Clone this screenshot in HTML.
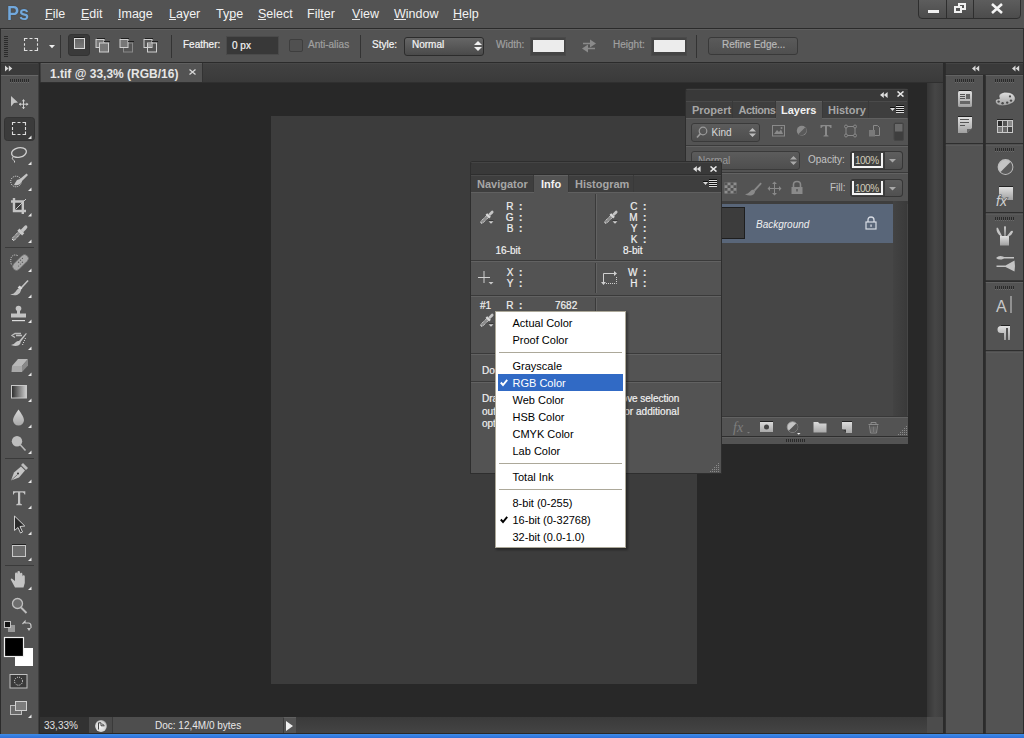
<!DOCTYPE html>
<html><head><meta charset="utf-8">
<style>
*{margin:0;padding:0;box-sizing:border-box}
html,body{width:1024px;height:738px;overflow:hidden;background:#535353;font-family:"Liberation Sans",sans-serif;color:#e6e6e6}
div,span,svg{position:absolute}
.t{white-space:nowrap;line-height:1}
#menubar{left:0;top:0;width:1024px;height:28px;background:#535353}
.m{top:8px;font-size:12.5px;color:#f2f2f2;white-space:nowrap;line-height:1}
.m u{text-decoration:none;position:relative}
.m u:after{content:"";position:absolute;left:0;right:0;bottom:1.5px;height:1px;background:#e8e8e8}
#line28{left:0;top:28px;width:1024px;height:1px;background:#2b2b2b}
#optbar{left:0;top:29px;width:1024px;height:33px;background:#535353;border-top:1px solid #5e5e5e}
#line62{left:0;top:62px;width:1024px;height:1px;background:#2b2b2b}
#tabbar{left:40px;top:63px;width:903px;height:20px;background:linear-gradient(#424242,#3a3a3a);border-bottom:1px solid #2f2f2f}
#pasteboard{left:40px;top:83px;width:887px;height:634px;background:#282828}
#doc{left:271px;top:116px;width:426px;height:568px;background:#3c3c3c}
#vscroll{left:927px;top:83px;width:16px;height:634px;background:linear-gradient(90deg,#363636,#464646 50%,#3e3e3e)}
#status{left:40px;top:717px;width:887px;height:17px;background:#3e3e3e;border-bottom:1px solid #2a2826}
#corner{left:927px;top:717px;width:16px;height:17px;background:#4c4c4c;border-bottom:1px solid #2a2826}
#taskbar{left:0;top:734px;width:1024px;height:4px;background:linear-gradient(#3d8ce9,#2f70d8)}
#toolbar{left:0;top:0;width:40px;height:738px}
.sep{background:#353535;width:1px}
.lbl{font-size:10px;color:#f4f4f4;-webkit-text-stroke:0.2px currentColor;white-space:nowrap;line-height:1}
.dis{color:#a0a0a0}

.pn{background:#535353}
.hd{background:#393939}
.tb{font-size:11px;font-weight:bold;color:#a6a6a6;white-space:nowrap;line-height:1}
.tba{color:#f2f2f2}
.it{font-size:10px;color:#f0f0f0;-webkit-text-stroke:0.2px currentColor;white-space:nowrap;line-height:1}
.dk{background:#333}
.lt{background:#606060}
.mi{font-size:11px;color:#000;white-space:nowrap;line-height:1}
</style></head><body>
<div id="menubar">
  <div class="t" style="left:7px;top:1.5px;font-size:21px;font-weight:bold;color:#72a8dc;transform:scaleX(0.86);transform-origin:0 0;text-shadow:0 0 1px #2a2a2a">Ps</div>
  <div class="m" style="left:45px"><u>F</u>ile</div>
  <div class="m" style="left:81px"><u>E</u>dit</div>
  <div class="m" style="left:118px"><u>I</u>mage</div>
  <div class="m" style="left:169px"><u>L</u>ayer</div>
  <div class="m" style="left:216px">Ty<u>p</u>e</div>
  <div class="m" style="left:258px"><u>S</u>elect</div>
  <div class="m" style="left:307px">Fil<u>t</u>er</div>
  <div class="m" style="left:352px"><u>V</u>iew</div>
  <div class="m" style="left:394px"><u>W</u>indow</div>
  <div class="m" style="left:453px"><u>H</u>elp</div>
  <!-- window buttons -->
  <div style="left:918px;top:-2px;width:103px;height:21px;border:1px solid #2e2e2e;border-radius:0 0 4px 4px;background:linear-gradient(#5e5e5e,#4c4c4c)">
    <div style="left:27px;top:0;width:1px;height:19px;background:#2e2e2e"></div>
    <div style="left:54px;top:0;width:1px;height:19px;background:#2e2e2e"></div>
    <div style="left:9px;top:10.5px;width:10.5px;height:3.5px;background:#f0f0f0"></div>
    <div style="left:35px;top:4px;width:12px;height:10px">
      <div style="left:4px;top:0;width:8px;height:7px;border:2px solid #f0f0f0"></div>
      <div style="left:0;top:3px;width:8px;height:7px;border:2px solid #f0f0f0;background:#555"></div>
    </div>
    <svg style="left:72px;top:4px" width="12" height="11" viewBox="0 0 12 11"><path d="M1 1 L11 10 M11 1 L1 10" stroke="#f4f4f4" stroke-width="2.6"/></svg>
  </div>
</div>
<div id="line28"></div>
<div id="optbar">
  <!-- grip -->
  <div style="left:4px;top:6px;width:4px;height:21px;background:repeating-linear-gradient(#2a2a2a 0 1px,transparent 1px 2px)"></div>
  <!-- marquee icon -->
  <svg style="left:22px;top:6px" width="18" height="17" viewBox="0 0 18 17"><path d="M2.5 5 V2.5 H5.5 M7.5 2.5 H10.5 M12.5 2.5 H15.5 V5.5 M15.5 7.2 V9.8 M15.5 11.5 V14.5 H12.5 M10.5 14.5 H7.5 M5.5 14.5 H2.5 V11.5 M2.5 9.8 V7.2" fill="none" stroke="#e0e0e0" stroke-width="1.1"/></svg>
  <svg style="left:48.5px;top:15px" width="6" height="4"><path d="M0 0 H6 L3 3.2Z" fill="#f0f0f0"/></svg>
  <div class="sep" style="left:60px;top:5px;height:23px;background:#333"></div>
  <!-- pressed button -->
  <div style="left:68px;top:4px;width:22px;height:22px;background:#3a3a3a;border-radius:3px;border:1px solid #333;box-shadow:0 0 1px #5c5c5c"></div>
  <div style="left:74px;top:7px;width:10px;height:1px;background:#1e1e1e"></div>
  <div style="left:74px;top:8px;width:10.5px;height:10.5px;border:1px solid #dadada;background:linear-gradient(#666,#7a7a7a)"></div>
  <!-- add -->
  <svg style="left:95px;top:7.5px" width="15" height="15" viewBox="0 0 15 15">
    <rect x="1" y="1.5" width="8" height="8" fill="#777" stroke="#d0d0d0" stroke-width="1"/>
    <rect x="4.5" y="5" width="9" height="9" fill="#777" stroke="#d0d0d0" stroke-width="1"/>
    <rect x="2" y="0" width="8" height="1" fill="#202020"/><rect x="9" y="3" width="6" height="1" fill="#202020"/>
  </svg>
  <svg style="left:119px;top:7.5px" width="15" height="15" viewBox="0 0 15 15">
    <rect x="4.5" y="5" width="9" height="9" fill="#555" stroke="#8a8a8a" stroke-width="1"/>
    <rect x="1" y="1.5" width="8" height="8" fill="#777" stroke="#d0d0d0" stroke-width="1"/>
    <rect x="2" y="0" width="8" height="1" fill="#202020"/><rect x="9" y="3" width="6" height="1" fill="#202020"/>
  </svg>
  <svg style="left:143px;top:7.5px" width="15" height="15" viewBox="0 0 15 15">
    <rect x="1" y="1.5" width="8" height="8" fill="none" stroke="#d0d0d0" stroke-width="1"/>
    <rect x="4.5" y="5" width="9" height="9" fill="none" stroke="#d0d0d0" stroke-width="1"/>
    <rect x="5" y="5.5" width="3.5" height="3.5" fill="#999"/>
    <rect x="2" y="0" width="8" height="1" fill="#202020"/><rect x="9" y="3" width="6" height="1" fill="#202020"/>
  </svg>
  <div class="sep" style="left:171px;top:5px;height:23px;background:#333"></div>
  <div class="lbl" style="left:183px;top:10px">Feather:</div>
  <div style="left:226px;top:6px;width:53px;height:19px;background:#383838;border:1px solid #4a4a4a"></div>
  <div class="lbl" style="left:232px;top:11px;color:#f4f4f4">0 px</div>
  <div style="left:289px;top:9px;width:14px;height:13px;border:1px solid #3e3e3e;border-radius:2px;background:#505050"></div>
  <div class="lbl dis" style="left:308px;top:10px">Anti-alias</div>
  <div class="sep" style="left:360px;top:5px;height:23px;background:#333"></div>
  <div class="lbl" style="left:372px;top:10px">Style:</div>
  <div style="left:404px;top:7px;width:80px;height:19px;border:1px solid #2c2c2c;border-radius:3px;background:linear-gradient(#666,#4a4a4a)"></div>
  <div class="lbl" style="left:412px;top:10px;color:#f4f4f4">Normal</div>
  <svg style="left:474px;top:10px" width="8" height="12"><path d="M0 5 L4 1 L8 5Z M0 7 L4 11 L8 7Z" fill="#f0f0f0"/></svg>
  <div class="lbl dis" style="left:496px;top:10px">Width:</div>
  <div style="left:530px;top:7px;width:36px;height:19px;background:#444;border:1px solid #4a4a4a"></div>
  <div style="left:533px;top:9.5px;width:31px;height:12.5px;background:#ececec"></div>
  <svg style="left:581px;top:9px" width="16" height="14" viewBox="0 0 16 14"><path d="M2 4.5 H10 M6 9.5 H14" stroke="#8a8a8a" stroke-width="1.5"/><path d="M9 0.5 L15 4.5 L9 8.5Z M7 5.5 L1 9.5 L7 13.5Z" fill="#8a8a8a"/></svg>
  <div class="lbl dis" style="left:613px;top:10px">Height:</div>
  <div style="left:651px;top:7px;width:36px;height:19px;background:#444;border:1px solid #4a4a4a"></div>
  <div style="left:654px;top:9.5px;width:31px;height:12.5px;background:#ececec"></div>
  <div class="sep" style="left:696px;top:5px;height:23px;background:#333"></div>
  <div style="left:708px;top:7px;width:90px;height:18px;border:1px solid #393939;border-radius:3px;background:linear-gradient(#5a5a5a,#4f4f4f)"></div>
  <div class="lbl" style="left:722px;top:10px;color:#b8b8b8">Refine Edge...</div>
</div>
<div id="line62"></div><div style="left:0;top:29px;width:1px;height:33px;background:#2e2e2e"></div><div style="left:1023px;top:29px;width:1px;height:33px;background:#2e2e2e"></div>
<div id="toolbar">
<svg style="left:0;top:0" width="40" height="738" viewBox="0 0 40 738">
<defs>
<linearGradient id="gg" x1="0" x2="0" y1="0" y2="1"><stop offset="0" stop-color="#d8d8d8"/><stop offset="1" stop-color="#a8a8a8"/></linearGradient>
<linearGradient id="grd" x1="0" x2="1" y1="0" y2="0"><stop offset="0" stop-color="#2a2a2a"/><stop offset="1" stop-color="#d0d0d0"/></linearGradient>
</defs>
<rect x="0" y="63" width="1" height="671" fill="#2b2b2b"/>
<rect x="1" y="63" width="37.5" height="12" fill="#3a3a3a"/>
<rect x="1" y="63" width="37.5" height="1" fill="#434343"/>
<rect x="1" y="75" width="37.5" height="659" fill="#535353"/>
<rect x="1" y="75" width="37.5" height="1" fill="#666"/>
<rect x="38.5" y="63" width="1.5" height="671" fill="#2b2b2b"/>
<path d="M5 65.5 L8.5 68.5 L5 71.5Z M8.8 65.5 L12.3 68.5 L8.8 71.5Z" fill="#d8d8d8"/>
<g fill="#2a2a2a"><rect x="10" y="79" width="1" height="3"/><rect x="12" y="79" width="1" height="3"/><rect x="14" y="79" width="1" height="3"/><rect x="16" y="79" width="1" height="3"/><rect x="18" y="79" width="1" height="3"/><rect x="20" y="79" width="1" height="3"/><rect x="22" y="79" width="1" height="3"/><rect x="24" y="79" width="1" height="3"/><rect x="26" y="79" width="1" height="3"/><rect x="28" y="79" width="1" height="3"/></g>
<g fill="#6a6a6a"><rect x="10" y="82" width="1" height="1"/><rect x="12" y="82" width="1" height="1"/><rect x="14" y="82" width="1" height="1"/><rect x="16" y="82" width="1" height="1"/><rect x="18" y="82" width="1" height="1"/><rect x="20" y="82" width="1" height="1"/><rect x="22" y="82" width="1" height="1"/><rect x="24" y="82" width="1" height="1"/><rect x="26" y="82" width="1" height="1"/><rect x="28" y="82" width="1" height="1"/></g>
<!-- move -->
<path d="M11 96 L18 102.5 L14 103 L11 106.5Z" fill="#c4c4c4"/>
<path d="M23.5 99.5 V109 M19 104.2 H28.2" stroke="#d0d0d0" stroke-width="1"/>
<path d="M23.5 99.5 l-1.8 1.8 h3.6Z M23.5 109 l-1.8 -1.8 h3.6Z M19 104.2 l1.8 -1.8 v3.6Z M28.2 104.2 l-1.8 -1.8 v3.6Z" fill="#d0d0d0"/>
<!-- selected marquee -->
<rect x="4.5" y="117.5" width="30" height="23" rx="3" fill="#3b3b3b" stroke="#333" stroke-width="1"/>
<path d="M12.5 125 V122.5 H15.5 M17.5 122.5 H20.5 M22.5 122.5 H25.5 V125.5 M25.5 127 V130 M25.5 131.5 V134.5 H22.5 M20.5 134.5 H17.5 M15.5 134.5 H12.5 V131.5 M12.5 130 V127" fill="none" stroke="#dedede" stroke-width="1.1"/>
<path d="M31.5 135.5 V139 H28Z" fill="#e8e8e8"/>
<!-- lasso -->
<ellipse cx="19" cy="152.5" rx="7.5" ry="4.8" transform="rotate(-12 19 152.5)" fill="none" stroke="#d0d0d0" stroke-width="1.3"/>
<path d="M13 157 q-2 2 0.5 3 q1.5 0.5 1 2.5" fill="none" stroke="#d0d0d0" stroke-width="1"/>
<path d="M31.5 161.5 V165 H28Z" fill="#e8e8e8"/>
<!-- quick select -->
<circle cx="16" cy="181.5" r="5.3" fill="none" stroke="#e8e8e8" stroke-width="1" stroke-dasharray="1 1.1"/>
<path d="M14 185 q3 1 6 -1 l2 -3 l6 -6 l-1.5 -1.5 l-6.5 5.5 l-3 1 q-2 3 -3 5Z" fill="#c4c4c4"/>
<path d="M31.5 187.5 V191 H28Z" fill="#e8e8e8"/>
<!-- crop -->
<rect x="15" y="202" width="7" height="8" fill="#3e3e3e"/><path d="M14 198 V211 H26 M11 201.5 H22.8 V214" fill="none" stroke="#c4c4c4" stroke-width="2.4"/>
<path d="M15.5 209.5 L26 199" stroke="#c8c8c8" stroke-width="1"/>
<path d="M31.5 213.0 V216.5 H28Z" fill="#e8e8e8"/>
<!-- eyedropper -->
<path d="M12.6 240 L12.2 238.2 L19.6 230.6 L21.6 232.6 L14.2 240.4Z" fill="#8a8a8a" stroke="#e4e4e4" stroke-width="1" stroke-dasharray="1.2 0.8"/>
<path d="M18.4 229.6 L23.2 234.4" stroke="#c8c8c8" stroke-width="3"/>
<path d="M20.6 230 L24 226.4 Q25.8 224.6 27 225.8 Q28.2 227.2 26.4 229 L23 232.4Z" fill="#c4c4c4"/>
<path d="M31.5 239.5 V243 H28Z" fill="#e8e8e8"/>
<rect x="5" y="247" width="29" height="1" fill="#3a3a3a"/>
<!-- healing -->
<path d="M17.5 255.5 q-4 -1.5 -6 1.5 q-1.5 3 0 8" fill="none" stroke="#e0e0e0" stroke-width="1" stroke-dasharray="1 1.2"/>
<rect x="11" y="258.7" width="19" height="7.6" rx="3.8" transform="rotate(-45 20.5 262.5)" fill="#a8a8a8" stroke="#6a6a6a" stroke-width="0.6"/>
<g fill="#5e5e5e"><circle cx="18.6" cy="262.2" r="0.7"/><circle cx="20.5" cy="260.3" r="0.7"/><circle cx="22.4" cy="262.2" r="0.7"/><circle cx="20.5" cy="264.1" r="0.7"/><circle cx="18.6" cy="266" r="0.6"/><circle cx="22.4" cy="258.4" r="0.6"/></g>
<path d="M31.5 268.5 V272 H28Z" fill="#e8e8e8"/>
<!-- brush -->
<path d="M19.5 288.5 L27.5 280 L28.6 281.1 L20.6 289.8Z" fill="#c4c4c4"/>
<path d="M17.6 287.6 L19.8 285.6 L22.4 288.2 L20.4 290.2Z" fill="#d8d8d8"/>
<path d="M10 294.2 q3.5 0.2 5.5 -2.5 q1.5 -2.6 3.6 -3.4 l2 2 q-0.6 3 -3.6 4.4 q-3.5 1.5 -7.5 -0.5Z" fill="#c0c0c0"/>
<path d="M31.5 294.5 V298 H28Z" fill="#e8e8e8"/>
<!-- stamp -->
<circle cx="18.5" cy="308.5" r="2.8" fill="#c4c4c4"/><rect x="17" y="309" width="3" height="5" fill="#c4c4c4"/>
<rect x="11" y="313.5" width="15" height="4" fill="#c4c4c4"/>
<rect x="12" y="320" width="13" height="1.2" fill="#dcdcdc"/>
<path d="M31.5 319.5 V323 H28Z" fill="#e8e8e8"/>
<!-- history brush -->
<path d="M21 333.5 H15 l-3 2 l3 2 M16 335.5 H22" fill="none" stroke="#bcbcbc" stroke-width="1.3"/>
<path d="M11 345 q3 -0.5 5 -3 q1.5 -1.5 3 -1 l7 -8 l0.8 0.8 l-6 8 q0 2.5 -2.5 3.7 q-3 1 -7.3 -0.5Z" fill="#c4c4c4"/>
<path d="M25.5 338 l-3 7" stroke="#e0e0e0" stroke-width="1" stroke-dasharray="1 1.2"/>
<path d="M31.5 346.5 V350 H28Z" fill="#e8e8e8"/>
<!-- eraser -->
<path d="M12 366 L18 359 H28 L22 366Z" fill="#b8b8b8"/><path d="M12 366 H22 V372 H11.5Z" fill="#a8a8a8"/><path d="M22 366 L28 359 V365.5 L22 372Z" fill="#888"/>
<path d="M31.5 372.5 V376 H28Z" fill="#e8e8e8"/>
<!-- gradient -->
<rect x="11.5" y="385.5" width="15" height="12.5" fill="url(#grd)" stroke="#c8c8c8" stroke-width="1"/>
<path d="M31.5 398.5 V402 H28Z" fill="#e8e8e8"/>
<!-- blur drop -->
<path d="M18.5 409.5 Q13 417 13 420 A5.5 5.5 0 0 0 24 420 Q24 417 18.5 409.5Z" fill="url(#gg)"/>
<path d="M31.5 424.5 V428 H28Z" fill="#e8e8e8"/>
<!-- dodge -->
<circle cx="17" cy="441.2" r="5.2" fill="#bdbdbd"/><path d="M20 444.5 L25.5 450.5" stroke="#b8b8b8" stroke-width="1.6"/>
<path d="M31.5 450.5 V454 H28Z" fill="#e8e8e8"/>
<rect x="5" y="458" width="29" height="1" fill="#3a3a3a"/>
<!-- pen -->
<path d="M11 480.5 L14 472.5 L21 466.5 L25 470.5 L19 477.5Z" fill="#c4c4c4"/><path d="M21 465 L23 463 L28 468 L26 470Z" fill="#bcbcbc"/>
<circle cx="18" cy="473.5" r="1" fill="#333"/><path d="M11 480.5 L17.5 474.5" stroke="#555" stroke-width="0.7"/>
<path d="M31.5 479.5 V483 H28Z" fill="#e8e8e8"/>
<!-- type -->
<path d="M13 491.2 H25.3 V494.5 H24.5 Q24 492.5 22.5 492.5 H20.2 V503.5 L22 504.5 V505.2 H16.2 V504.5 L18 503.5 V492.5 H15.8 Q14 492.5 13.8 494.5 H13Z" fill="#c4c4c4"/>
<path d="M31.5 505.5 V509 H28Z" fill="#e8e8e8"/>
<!-- path select -->
<path d="M14.5 516 V530.5 L18 527.5 L20.5 533 L22.5 532 L20 526.5 L24.8 526Z" fill="#2a2a2a" stroke="#cfcfcf" stroke-width="1"/>
<path d="M31.5 531.5 V535 H28Z" fill="#e8e8e8"/>
<!-- rectangle -->
<rect x="12.5" y="545.5" width="13" height="11" fill="#6c6c6c" stroke="#c8c8c8" stroke-width="1"/>
<rect x="12" y="544" width="14" height="1" fill="#222"/>
<path d="M31.5 557.5 V561 H28Z" fill="#e8e8e8"/>
<rect x="5" y="565" width="29" height="1" fill="#3a3a3a"/>
<!-- hand -->
<path d="M15 587.5 L11 580 q-1 -1.5 0.8 -1.6 L15 581 V574 q0 -1.4 1.2 -1.4 q1.2 0 1.2 1.4 V580 V572.5 q0 -1.4 1.3 -1.4 q1.3 0 1.3 1.4 V580 V574 q0 -1.3 1.2 -1.3 q1.2 0 1.2 1.3 V580 V576.5 q0 -1.2 1.2 -1.2 q1.2 0 1.2 1.2 V583 L23.5 587.5Z" fill="#c4c4c4"/>
<path d="M31.5 586.5 V590 H28Z" fill="#e8e8e8"/>
<!-- zoom -->
<circle cx="17.5" cy="603.5" r="5" fill="#6e6e6e" stroke="#c0c0c0" stroke-width="1.3"/><path d="M21 607.5 L26.5 613" stroke="#bcbcbc" stroke-width="2"/>
<!-- small swatches -->
<rect x="8.5" y="625.5" width="6" height="6" fill="#999" stroke="#999"/>
<rect x="4.5" y="621.5" width="6" height="6" fill="#111" stroke="#c0c0c0" stroke-width="1"/>
<path d="M22.5 624 L25 621.2 V623 H28.5 Q31 623 31 626 V628" fill="none" stroke="#c8c8c8" stroke-width="1.2"/>
<path d="M29 631 L27 628 H31Z" fill="#c8c8c8"/>
<!-- fg bg -->
<rect x="14.5" y="647.5" width="19" height="19" fill="#fff" stroke="#535353" stroke-width="1"/>
<rect x="4.5" y="637.5" width="19" height="19" fill="#000" stroke="#f0f0f0" stroke-width="1.2"/>
<!-- quick mask -->
<rect x="10" y="674.5" width="17" height="13.5" fill="#3a3a3a" stroke="#c0c0c0" stroke-width="1"/>
<circle cx="18.5" cy="681.2" r="4" fill="none" stroke="#e8e8e8" stroke-width="1" stroke-dasharray="1 1.1"/>
<!-- screen mode -->
<rect x="10.5" y="705.5" width="11" height="9" fill="#6a6a6a" stroke="#c0c0c0" stroke-width="1"/>
<rect x="15.5" y="701.5" width="11" height="9" fill="#7c7c7c" stroke="#d0d0d0" stroke-width="1"/>
<path d="M31.5 714.5 V718 H28Z" fill="#e8e8e8"/>
</svg></div>
<div id="tabbar">
  <div style="left:1px;top:0;width:161px;height:19px;background:#535353;border-top:1px solid #5f5f5f"></div><div style="left:162px;top:0;width:1px;height:19px;background:#333"></div><div style="left:163px;top:0;width:740px;height:1px;background:#474747"></div>
  <div class="t" style="left:10px;top:5px;font-size:12px;font-weight:bold;color:#e6e6e6">1.tif @ 33,3% (RGB/16)</div>
  <svg style="left:149px;top:6px" width="7" height="6"><path d="M0.5 0.5 L6.5 5.5 M6.5 0.5 L0.5 5.5" stroke="#d8d8d8" stroke-width="1.3"/></svg>
</div>
<div id="pasteboard"></div>
<div id="doc"></div>
<div id="vscroll"></div>
<div id="status">
  <div style="left:0;top:0;width:49px;height:16px;background:#323232"></div>
  <div class="t" style="left:4px;top:4px;font-size:10px;color:#e0e0e0">33,33%</div>
  <div style="left:49px;top:0;width:23px;height:16px;background:#4a4a4a"></div>
  <svg style="left:54px;top:1.5px" width="14" height="14" viewBox="0 0 14 14"><defs><radialGradient id="sg" cx="0.45" cy="0.55" r="0.6"><stop offset="0" stop-color="#f4f4f4"/><stop offset="0.7" stop-color="#d8d8d8"/><stop offset="1" stop-color="#9a9a9a"/></radialGradient></defs><circle cx="7" cy="7" r="5.9" fill="url(#sg)"/><path d="M4.5 10.5 V3.8 H7 V6.8 H10.5" fill="none" stroke="#333" stroke-width="0.9"/><path d="M7.8 4.8 L10.2 6.2" stroke="#333" stroke-width="0.8"/></svg>
  <div style="left:72px;top:0;width:171px;height:16px;background:#4e4e4e;border-left:1px solid #3a3a3a"></div>
  <div class="t" style="left:115px;top:4px;font-size:10px;color:#e8e8e8">Doc: 12,4M/0 bytes</div>
  <div style="left:243px;top:0;width:13px;height:16px;background:#545454;border-left:1px solid #3a3a3a;border-top:1px solid #606060"></div>
  <svg style="left:246px;top:4px" width="8" height="10"><path d="M0 0 L7 5 L0 10Z" fill="#f0f0f0"/></svg>
  <div style="left:256px;top:0;width:631px;height:16px;background:linear-gradient(#3a3a3a,#444)"></div>
</div>
<div id="corner"></div>
<svg style="left:943px;top:0" width="81" height="738" viewBox="943 0 81 738">
<defs><linearGradient id="dg" x1="0" x2="0" y1="0" y2="1"><stop offset="0" stop-color="#e0e0e0"/><stop offset="1" stop-color="#a0a0a0"/></linearGradient></defs>
<rect x="943" y="63" width="81" height="671" fill="#2b2b2b"/>
<rect x="945.8" y="63" width="77.4" height="11.5" fill="#3a3a3a"/>
<rect x="945.8" y="63" width="77.4" height="1" fill="#444"/>
<path d="M975.5 65.5 L972 68.5 L975.5 71.5Z M979.2 65.5 L975.7 68.5 L979.2 71.5Z" fill="#d8d8d8"/>
<path d="M1015.5 65.5 L1012 68.5 L1015.5 71.5Z M1019.2 65.5 L1015.7 68.5 L1019.2 71.5Z" fill="#d8d8d8"/>
<rect x="945.8" y="75" width="37.2" height="68" fill="#535353"/><rect x="945.8" y="75" width="37.2" height="1" fill="#626262"/><rect x="945.8" y="143" width="37.2" height="1.5" fill="#2e2e2e"/>
<rect x="945.8" y="144.5" width="37.2" height="589.0" fill="#535353"/><rect x="945.8" y="144.5" width="37.2" height="1" fill="#626262"/><rect x="945.8" y="733.5" width="37.2" height="1.5" fill="#2e2e2e"/>
<rect x="985.8" y="75" width="37.4" height="68" fill="#535353"/><rect x="985.8" y="75" width="37.4" height="1" fill="#626262"/><rect x="985.8" y="143" width="37.4" height="1.5" fill="#2e2e2e"/>
<rect x="985.8" y="144.5" width="37.4" height="67.5" fill="#535353"/><rect x="985.8" y="144.5" width="37.4" height="1" fill="#626262"/><rect x="985.8" y="212" width="37.4" height="1.5" fill="#2e2e2e"/>
<rect x="985.8" y="213.5" width="37.4" height="67.0" fill="#535353"/><rect x="985.8" y="213.5" width="37.4" height="1" fill="#626262"/><rect x="985.8" y="280.5" width="37.4" height="1.5" fill="#2e2e2e"/>
<rect x="985.8" y="282" width="37.4" height="68" fill="#535353"/><rect x="985.8" y="282" width="37.4" height="1" fill="#626262"/><rect x="985.8" y="350" width="37.4" height="1.5" fill="#2e2e2e"/>
<rect x="985.8" y="351.5" width="37.4" height="382.0" fill="#535353"/><rect x="985.8" y="351.5" width="37.4" height="1" fill="#626262"/><rect x="985.8" y="733.5" width="37.4" height="1.5" fill="#2e2e2e"/>
<g><rect x="955" y="79" width="1" height="3" fill="#2a2a2a"/><rect x="955" y="82" width="1" height="1" fill="#6a6a6a"/><rect x="957" y="79" width="1" height="3" fill="#2a2a2a"/><rect x="957" y="82" width="1" height="1" fill="#6a6a6a"/><rect x="959" y="79" width="1" height="3" fill="#2a2a2a"/><rect x="959" y="82" width="1" height="1" fill="#6a6a6a"/><rect x="961" y="79" width="1" height="3" fill="#2a2a2a"/><rect x="961" y="82" width="1" height="1" fill="#6a6a6a"/><rect x="963" y="79" width="1" height="3" fill="#2a2a2a"/><rect x="963" y="82" width="1" height="1" fill="#6a6a6a"/><rect x="965" y="79" width="1" height="3" fill="#2a2a2a"/><rect x="965" y="82" width="1" height="1" fill="#6a6a6a"/><rect x="967" y="79" width="1" height="3" fill="#2a2a2a"/><rect x="967" y="82" width="1" height="1" fill="#6a6a6a"/><rect x="969" y="79" width="1" height="3" fill="#2a2a2a"/><rect x="969" y="82" width="1" height="1" fill="#6a6a6a"/><rect x="971" y="79" width="1" height="3" fill="#2a2a2a"/><rect x="971" y="82" width="1" height="1" fill="#6a6a6a"/><rect x="973" y="79" width="1" height="3" fill="#2a2a2a"/><rect x="973" y="82" width="1" height="1" fill="#6a6a6a"/><rect x="995" y="79" width="1" height="3" fill="#2a2a2a"/><rect x="995" y="82" width="1" height="1" fill="#6a6a6a"/><rect x="997" y="79" width="1" height="3" fill="#2a2a2a"/><rect x="997" y="82" width="1" height="1" fill="#6a6a6a"/><rect x="999" y="79" width="1" height="3" fill="#2a2a2a"/><rect x="999" y="82" width="1" height="1" fill="#6a6a6a"/><rect x="1001" y="79" width="1" height="3" fill="#2a2a2a"/><rect x="1001" y="82" width="1" height="1" fill="#6a6a6a"/><rect x="1003" y="79" width="1" height="3" fill="#2a2a2a"/><rect x="1003" y="82" width="1" height="1" fill="#6a6a6a"/><rect x="1005" y="79" width="1" height="3" fill="#2a2a2a"/><rect x="1005" y="82" width="1" height="1" fill="#6a6a6a"/><rect x="1007" y="79" width="1" height="3" fill="#2a2a2a"/><rect x="1007" y="82" width="1" height="1" fill="#6a6a6a"/><rect x="1009" y="79" width="1" height="3" fill="#2a2a2a"/><rect x="1009" y="82" width="1" height="1" fill="#6a6a6a"/><rect x="1011" y="79" width="1" height="3" fill="#2a2a2a"/><rect x="1011" y="82" width="1" height="1" fill="#6a6a6a"/><rect x="1013" y="79" width="1" height="3" fill="#2a2a2a"/><rect x="1013" y="82" width="1" height="1" fill="#6a6a6a"/><rect x="995" y="148" width="1" height="3" fill="#2a2a2a"/><rect x="995" y="151" width="1" height="1" fill="#6a6a6a"/><rect x="997" y="148" width="1" height="3" fill="#2a2a2a"/><rect x="997" y="151" width="1" height="1" fill="#6a6a6a"/><rect x="999" y="148" width="1" height="3" fill="#2a2a2a"/><rect x="999" y="151" width="1" height="1" fill="#6a6a6a"/><rect x="1001" y="148" width="1" height="3" fill="#2a2a2a"/><rect x="1001" y="151" width="1" height="1" fill="#6a6a6a"/><rect x="1003" y="148" width="1" height="3" fill="#2a2a2a"/><rect x="1003" y="151" width="1" height="1" fill="#6a6a6a"/><rect x="1005" y="148" width="1" height="3" fill="#2a2a2a"/><rect x="1005" y="151" width="1" height="1" fill="#6a6a6a"/><rect x="1007" y="148" width="1" height="3" fill="#2a2a2a"/><rect x="1007" y="151" width="1" height="1" fill="#6a6a6a"/><rect x="1009" y="148" width="1" height="3" fill="#2a2a2a"/><rect x="1009" y="151" width="1" height="1" fill="#6a6a6a"/><rect x="1011" y="148" width="1" height="3" fill="#2a2a2a"/><rect x="1011" y="151" width="1" height="1" fill="#6a6a6a"/><rect x="1013" y="148" width="1" height="3" fill="#2a2a2a"/><rect x="1013" y="151" width="1" height="1" fill="#6a6a6a"/><rect x="995" y="217" width="1" height="3" fill="#2a2a2a"/><rect x="995" y="220" width="1" height="1" fill="#6a6a6a"/><rect x="997" y="217" width="1" height="3" fill="#2a2a2a"/><rect x="997" y="220" width="1" height="1" fill="#6a6a6a"/><rect x="999" y="217" width="1" height="3" fill="#2a2a2a"/><rect x="999" y="220" width="1" height="1" fill="#6a6a6a"/><rect x="1001" y="217" width="1" height="3" fill="#2a2a2a"/><rect x="1001" y="220" width="1" height="1" fill="#6a6a6a"/><rect x="1003" y="217" width="1" height="3" fill="#2a2a2a"/><rect x="1003" y="220" width="1" height="1" fill="#6a6a6a"/><rect x="1005" y="217" width="1" height="3" fill="#2a2a2a"/><rect x="1005" y="220" width="1" height="1" fill="#6a6a6a"/><rect x="1007" y="217" width="1" height="3" fill="#2a2a2a"/><rect x="1007" y="220" width="1" height="1" fill="#6a6a6a"/><rect x="1009" y="217" width="1" height="3" fill="#2a2a2a"/><rect x="1009" y="220" width="1" height="1" fill="#6a6a6a"/><rect x="1011" y="217" width="1" height="3" fill="#2a2a2a"/><rect x="1011" y="220" width="1" height="1" fill="#6a6a6a"/><rect x="1013" y="217" width="1" height="3" fill="#2a2a2a"/><rect x="1013" y="220" width="1" height="1" fill="#6a6a6a"/><rect x="995" y="286" width="1" height="3" fill="#2a2a2a"/><rect x="995" y="289" width="1" height="1" fill="#6a6a6a"/><rect x="997" y="286" width="1" height="3" fill="#2a2a2a"/><rect x="997" y="289" width="1" height="1" fill="#6a6a6a"/><rect x="999" y="286" width="1" height="3" fill="#2a2a2a"/><rect x="999" y="289" width="1" height="1" fill="#6a6a6a"/><rect x="1001" y="286" width="1" height="3" fill="#2a2a2a"/><rect x="1001" y="289" width="1" height="1" fill="#6a6a6a"/><rect x="1003" y="286" width="1" height="3" fill="#2a2a2a"/><rect x="1003" y="289" width="1" height="1" fill="#6a6a6a"/><rect x="1005" y="286" width="1" height="3" fill="#2a2a2a"/><rect x="1005" y="289" width="1" height="1" fill="#6a6a6a"/><rect x="1007" y="286" width="1" height="3" fill="#2a2a2a"/><rect x="1007" y="289" width="1" height="1" fill="#6a6a6a"/><rect x="1009" y="286" width="1" height="3" fill="#2a2a2a"/><rect x="1009" y="289" width="1" height="1" fill="#6a6a6a"/><rect x="1011" y="286" width="1" height="3" fill="#2a2a2a"/><rect x="1011" y="289" width="1" height="1" fill="#6a6a6a"/><rect x="1013" y="286" width="1" height="3" fill="#2a2a2a"/><rect x="1013" y="289" width="1" height="1" fill="#6a6a6a"/></g>
<!-- doc info icon -->
<rect x="958" y="91" width="14" height="16" rx="1.5" fill="url(#dg)"/>
<rect x="959" y="90" width="12" height="1" fill="#222"/>
<rect x="960" y="94" width="5" height="1" fill="#555"/><rect x="960" y="96" width="5" height="1" fill="#555"/><rect x="960" y="98" width="5" height="1" fill="#555"/>
<rect x="966" y="94" width="4" height="5" fill="#666"/><rect x="960" y="101" width="10" height="3" fill="#666"/>
<!-- notes icon -->
<path d="M958 117 H972 V128 L967 133 H958Z" fill="url(#dg)"/>
<rect x="958" y="116" width="14" height="1" fill="#222"/>
<rect x="960" y="119" width="9" height="1" fill="#555"/><rect x="960" y="122" width="9" height="1" fill="#555"/><rect x="960" y="125" width="5" height="1" fill="#555"/>
<path d="M967 133 V129 H972Z" fill="#666"/>
<!-- palette -->
<path d="M1006 92.2 C1012 92.2 1015.2 95.2 1015.2 98.6 C1015.2 101.2 1013.6 102.6 1011.4 103.6 C1007.6 105.6 1003 106.2 999.5 105.4 C996.6 104.6 995.4 103 995.4 101.2 C995.4 99.6 996.8 99 998.6 99 C999.6 99 999.8 98.2 999.2 97.2 C998.4 94.6 1001.4 92.2 1006 92.2Z" fill="url(#dg)" stroke="#3a3a3a" stroke-width="0.5"/>
<circle cx="998.6" cy="101.6" r="1.2" fill="#4a4a4a"/><circle cx="1002.6" cy="103.2" r="1.2" fill="#4a4a4a"/><circle cx="1007.2" cy="102.6" r="1.2" fill="#4a4a4a"/><circle cx="1011" cy="100.6" r="1.2" fill="#4a4a4a"/><circle cx="1010" cy="96.4" r="1.1" fill="#4a4a4a"/>
<!-- swatches -->
<rect x="997" y="120" width="16" height="13" fill="#c8c8c8"/>
<rect x="997" y="119" width="16" height="1" fill="#222"/>
<rect x="998" y="121" width="4" height="5" fill="#2a2a2a"/><rect x="1003" y="121" width="4" height="5" fill="#555"/><rect x="1008" y="121" width="4" height="5" fill="#8a8a8a"/>
<rect x="998" y="127" width="4" height="5" fill="#777"/><rect x="1003" y="127" width="4" height="5" fill="#666"/><rect x="1008" y="127" width="4" height="5" fill="#444"/>
<!-- adjustments -->
<circle cx="1005.5" cy="167" r="7.2" fill="#c4c4c4" stroke="#bdbdbd" stroke-width="1.4"/>
<path d="M1010.4 162.1 A6.5 6.5 0 0 1 1000.6 171.9Z" fill="#5a5a5a"/>
<!-- styles -->
<rect x="999" y="187" width="14" height="13" fill="url(#dg)"/><rect x="999" y="186" width="14" height="1" fill="#222"/>
<text x="996" y="205.5" font-family="Liberation Sans" font-style="italic" font-size="14" fill="#d0d0d0" stroke="#535353" stroke-width="1.2" paint-order="stroke">fx</text>
<!-- brushes -->
<rect x="1000" y="236" width="9" height="9.5" fill="url(#dg)"/>
<path d="M1002 236 L998 228 q-1.5 -1.5 -1.5 1 q0 4 4 7Z M1004.5 236 L1004 227 q1 -2 2 0 l-0.5 9Z M1007 236 l4 -5 q2 -1 2 1 q-1 3 -4.5 4.5Z" fill="#c4c4c4"/>
<!-- brush presets -->
<path d="M996 258 q3 -3 7 -1.5 l1 0.5 h10 v1.5 h-10 l-1 0.5 q-4 1.5 -7 -1Z" fill="#c4c4c4"/>
<path d="M996.5 265.5 h9 l9 -5 q1 6 0 11 l-9 -4.5 h-9Z" fill="#c4c4c4"/>
<!-- character -->
<text x="996" y="312" font-family="Liberation Sans" font-size="16" fill="#c8c8c8">A</text>
<rect x="1010.5" y="296" width="1" height="17" fill="#d0d0d0"/>
<!-- paragraph -->
<path d="M1008 326 H1001 q-3.5 0 -3.5 3.5 q0 3.5 3.5 3.5 H1004 V340 H1006 V328 H1008 V340 H1010 V326Z" fill="url(#dg)"/>
<rect x="1001" y="325" width="9" height="1" fill="#222"/>
<rect x="1023.2" y="63" width="0.8" height="671" fill="#2b2b2b"/>
</svg>
<div id="layers"><div style="left:685px;top:88px;width:223px;height:356px;background:#2e2e2e;border-radius:3px 3px 0 0"></div>
<div style="left:686px;top:89px;width:222px;height:11px;background:#393939;border-radius:3px 3px 0 0"></div>
<div style="left:686px;top:89px;width:222px;height:1px;background:#444;border-radius:3px 3px 0 0"></div>
<svg style="left:880px;top:91.5px" width="8" height="6" viewBox="0 0 8 6"><path d="M3.8 0 L0 3 L3.8 6Z M7.6 0 L3.8 3 L7.6 6Z" fill="#e0e0e0"/></svg>
<svg style="left:897px;top:91px" width="7" height="6" viewBox="0 0 7 6"><path d="M0.5 0.5 L6.5 5.5 M6.5 0.5 L0.5 5.5" stroke="#e8e8e8" stroke-width="1.6"/></svg>
<div style="left:686px;top:100px;width:222px;height:18px;background:#393939"></div>
<div style="left:686px;top:101px;width:46px;height:17px;background:#3e3e3e;border-top:1px solid #4a4a4a"></div>
<div style="left:733px;top:101px;width:42px;height:17px;background:#3e3e3e;border-top:1px solid #4a4a4a"></div>
<div style="left:776px;top:101px;width:46px;height:18px;background:#535353;border-top:1px solid #626262"></div>
<div style="left:823px;top:101px;width:45px;height:17px;background:#3e3e3e;border-top:1px solid #4a4a4a"></div>
<div style="left:869px;top:101px;width:38px;height:17px;background:#3e3e3e;border-top:1px solid #4a4a4a"></div>
<div class="tb" style="left:692px;top:105px">Propert</div>
<div class="tb" style="left:738.5px;top:105px;letter-spacing:-0.5px">Actions</div>
<div class="tb tba" style="left:781px;top:105px">Layers</div>
<div class="tb" style="left:828px;top:105px">History</div>
<svg style="left:890px;top:105px" width="15" height="9" viewBox="0 0 15 9"><rect x="0" y="2" width="5" height="1" fill="#111"/><path d="M0 3 H5 L2.5 6Z" fill="#dcdcdc"/><path d="M6 0.5 H14 M6 2.5 H14 M6 4.5 H14 M6 6.5 H14" stroke="#111" stroke-width="1"/><path d="M6 1.5 H14 M6 3.5 H14 M6 5.5 H14 M6 7.5 H14" stroke="#dcdcdc" stroke-width="1"/></svg>
<div style="left:686px;top:118px;width:222px;height:100px;background:#535353"></div>
<div style="left:686px;top:118px;width:90px;height:1px;background:#606060"></div>
<div style="left:822px;top:118px;width:85px;height:1px;background:#606060"></div>
<div style="left:690.5px;top:123px;width:69px;height:19px;border:1px solid #3a3a3a;border-radius:3px;background:linear-gradient(#5c5c5c,#4e4e4e)"></div>
<svg style="left:696px;top:126px" width="12" height="13" viewBox="0 0 12 13"><circle cx="7" cy="5" r="3.8" fill="none" stroke="#9a9a9a" stroke-width="1.2"/><path d="M4.5 7.5 L1 11.5" stroke="#9a9a9a" stroke-width="1.6"/></svg>
<div class="t" style="left:711.5px;top:128px;font-size:10px;color:#d8d8d8">Kind</div>
<svg style="left:749px;top:127px" width="7" height="11"><path d="M0 4.5 L3.5 1 L7 4.5Z M0 6.5 L3.5 10 L7 6.5Z" fill="#bdbdbd"/></svg>
<svg style="left:770px;top:122px" width="135" height="20" viewBox="770 122 135 20"><rect x="772.5" y="125.5" width="12" height="10.5" fill="none" stroke="#8a8a8a" stroke-width="1"/><path d="M774 134 L777 130 L779 132 L781 129.5 L783 134Z" fill="#8a8a8a"/><circle cx="781.5" cy="128" r="1" fill="#8a8a8a"/><circle cx="801.8" cy="130.8" r="5" fill="#8a8a8a"/><path d="M805.3 127.3 A5 5 0 0 1 798.3 134.3Z" fill="#5a5a5a"/><path d="M820.5 125 H831.5 V128 H830.5 Q830 126.3 828.5 126.3 H827 V135 L828.5 135.8 V136.5 H823.5 V135.8 L825 135 V126.3 H823.5 Q822 126.3 821.5 128 H820.5Z" fill="#8a8a8a"/><rect x="846" y="126.5" width="9" height="9" fill="none" stroke="#8a8a8a" stroke-width="1"/><circle cx="846" cy="126.5" r="1.5" fill="#535353" stroke="#8a8a8a"/><circle cx="855" cy="126.5" r="1.5" fill="#535353" stroke="#8a8a8a"/><circle cx="846" cy="135.5" r="1.5" fill="#535353" stroke="#8a8a8a"/><circle cx="855" cy="135.5" r="1.5" fill="#535353" stroke="#8a8a8a"/><path d="M873.5 125.5 H877.5 L879.5 127.5 V135.5 H873.5Z" fill="none" stroke="#8a8a8a" stroke-width="1"/><rect x="869" y="130" width="6" height="6.5" fill="#7a7a7a"/><rect x="894" y="123" width="9.5" height="17.5" rx="1.5" fill="#3e3e3e" stroke="#464646"/><rect x="895" y="124" width="7.5" height="7.5" fill="#6a6a6a"/></svg>
<div style="left:686px;top:145px;width:222px;height:1px;background:#3a3a3a"></div>
<div style="left:686px;top:146px;width:222px;height:1px;background:#626262"></div>
<div style="left:691px;top:151px;width:109px;height:18.5px;border:1px solid #3a3a3a;border-radius:3px;background:linear-gradient(#5c5c5c,#4e4e4e)"></div>
<div class="t" style="left:698px;top:156px;font-size:10px;color:#9a9a9a">Normal</div>
<svg style="left:790px;top:155px" width="7" height="11"><path d="M0 4.5 L3.5 1 L7 4.5Z M0 6.5 L3.5 10 L7 6.5Z" fill="#a8a8a8"/></svg>
<div class="t" style="left:808px;top:155px;font-size:10px;color:#c4c4c4">Opacity:</div>
<div style="left:850px;top:150.5px;width:53px;height:19px;border:1px solid #363636;border-radius:3px;background:#3e3e3e"></div>
<div style="left:884px;top:151.5px;width:18px;height:17px;background:linear-gradient(#5e5e5e,#505050);border-left:1px solid #3a3a3a;border-radius:0 3px 3px 0"></div>
<svg style="left:889px;top:159px" width="8" height="4"><path d="M0 0 H7 L3.5 3.5Z" fill="#a8a8a8"/></svg>
<div style="left:852px;top:153px;width:31px;height:14.5px;background:#404040;border:2px solid #f4f4f4;border-top:none;border-bottom:2px solid #f4f4f4"></div>
<div class="t" style="left:855px;top:156px;font-size:10px;color:#d0ccb8;letter-spacing:-0.5px">100%</div>
<div style="left:686px;top:172px;width:222px;height:1px;background:#3a3a3a"></div>
<div style="left:686px;top:173px;width:222px;height:1px;background:#626262"></div>
<svg style="left:720px;top:178px" width="90" height="20" viewBox="720 178 90 20"><rect x="724.5" y="182.5" width="12" height="11" fill="#8e8e8e"/><rect x="724.5" y="182.5" width="3" height="2.75" fill="#545454"/><rect x="730.5" y="182.5" width="3" height="2.75" fill="#545454"/><rect x="727.5" y="185.25" width="3" height="2.75" fill="#545454"/><rect x="733.5" y="185.25" width="3" height="2.75" fill="#545454"/><rect x="724.5" y="188" width="3" height="2.75" fill="#545454"/><rect x="730.5" y="188" width="3" height="2.75" fill="#545454"/><rect x="727.5" y="190.75" width="3" height="2.75" fill="#545454"/><rect x="733.5" y="190.75" width="3" height="2.75" fill="#545454"/><path d="M753.5 190 L760.5 182.5 L761.8 183.8 L755 191.2Z" fill="#8a8a8a"/><path d="M745 194.2 q3 0 4.8 -2.4 q1.4 -2 3.4 -2.4 l2 2 q-0.4 2.6 -3.2 3.8 q-3.2 1.2 -7 -1Z" fill="#8a8a8a"/><path d="M774.5 182 V195 M768 188.5 H781" stroke="#8a8a8a" stroke-width="1"/><path d="M774.5 181.5 l-2.5 2.5 h5Z M774.5 195.5 l-2.5 -2.5 h5Z M767.5 188.5 l2.5 -2.5 v5Z M781.5 188.5 l-2.5 -2.5 v5Z" fill="#8a8a8a"/><path d="M793.5 187 V184.5 q0 -3 3.5 -3 q3.5 0 3.5 3 V187" fill="none" stroke="#8a8a8a" stroke-width="1.6"/><rect x="791.5" y="187" width="11" height="7" fill="#8a8a8a"/><rect x="796.3" y="189" width="1.4" height="2.5" fill="#535353"/></svg>
<div class="t" style="left:830px;top:183px;font-size:10px;color:#c4c4c4">Fill:</div>
<div style="left:850px;top:178.5px;width:53px;height:18.5px;border:1px solid #363636;border-radius:3px;background:#3e3e3e"></div>
<div style="left:884px;top:179.5px;width:18px;height:16.5px;background:linear-gradient(#5e5e5e,#505050);border-left:1px solid #3a3a3a;border-radius:0 3px 3px 0"></div>
<svg style="left:889px;top:187px" width="8" height="4"><path d="M0 0 H7 L3.5 3.5Z" fill="#a8a8a8"/></svg>
<div style="left:852px;top:181px;width:31px;height:14px;background:#404040;border:2px solid #f4f4f4;border-top:none;border-bottom:2px solid #f4f4f4"></div>
<div class="t" style="left:855px;top:184px;font-size:10px;color:#d0ccb8;letter-spacing:-0.5px">100%</div>
<div style="left:686px;top:201px;width:222px;height:216px;background:#464646"></div>
<div style="left:686px;top:201px;width:222px;height:3px;background:#3e3e3e"></div>
<div style="left:686px;top:204px;width:207px;height:39px;background:#596679"></div>
<div style="left:713px;top:207px;width:32px;height:32px;background:#3c3c3c;border:1px solid #1e1e1e"></div>
<div class="t" style="left:756px;top:219.5px;font-size:10px;font-style:italic;color:#f0f0f0">Background</div>
<svg style="left:865px;top:216px" width="12" height="14" viewBox="0 0 12 14"><path d="M3 6 V4 q0 -3 3 -3 q3 0 3 3 V6" fill="none" stroke="#d8dce4" stroke-width="1.3"/><rect x="1" y="6" width="10" height="7" fill="none" stroke="#d8dce4" stroke-width="1.2"/><rect x="5.4" y="8.5" width="1.3" height="2.3" fill="#d8dce4"/></svg>
<div style="left:893px;top:201px;width:14px;height:216px;background:linear-gradient(90deg,#434343,#3a3a3a)"></div>
<div style="left:686px;top:416px;width:222px;height:1px;background:#383838"></div><div style="left:686px;top:417px;width:222px;height:1px;background:#626262"></div>
<div style="left:686px;top:418px;width:222px;height:18px;background:#535353"></div>
<div style="left:686px;top:436px;width:222px;height:1px;background:#2e2e2e"></div>
<div style="left:686px;top:437px;width:222px;height:7px;background:#535353;border-top:1px solid #5e5e5e"></div>
<svg style="left:720px;top:418px" width="188" height="26" viewBox="720 418 188 26"><text x="733" y="432" font-family="Liberation Serif" font-style="italic" font-size="14" fill="#7e7e7e">fx</text><path d="M747 432 h3 l-1.5 1.5Z" fill="#7e7e7e"/><rect x="760" y="421.5" width="13" height="10.5" fill="url(#lg1)"/><rect x="760" y="421" width="13" height="1" fill="#222"/><circle cx="766.5" cy="427" r="2.5" fill="#444"/><circle cx="792.5" cy="427" r="5.3" fill="#c4c4c4" stroke="#9a9a9a" stroke-width="0.8"/><path d="M796.3 423.2 A5.3 5.3 0 0 1 788.7 430.8Z" fill="#555"/><path d="M797 433 h3.5 l-1.75 1.75Z" fill="#f0f0f0"/><path d="M813.5 422 H818 L819.5 423.5 H826.5 V432.5 H813.5Z" fill="url(#lg1)"/><path d="M842 422 H852 V433 H846 L842 429Z" fill="url(#lg1)"/><path d="M842 429.5 L846 433 V429.5Z" fill="#3a3a3a"/><rect x="842" y="421" width="10" height="1" fill="#222"/><path d="M868.5 424.5 H878.5 M871 424 V422.5 H876 V424 M869.5 425.5 L870.5 433 H876.5 L877.5 425.5" fill="none" stroke="#8a8a8a" stroke-width="1"/><path d="M872 426.5 V432 M873.5 426.5 V432 M875 426.5 V432" stroke="#8a8a8a" stroke-width="0.7"/><g fill="#8a8a8a"><rect x="906" y="434" width="1" height="1"/><rect x="904" y="434" width="1" height="1"/><rect x="906" y="432" width="1" height="1"/><rect x="902" y="434" width="1" height="1"/><rect x="904" y="432" width="1" height="1"/><rect x="906" y="430" width="1" height="1"/><rect x="900" y="434" width="1" height="1"/><rect x="902" y="432" width="1" height="1"/><rect x="904" y="430" width="1" height="1"/><rect x="906" y="428" width="1" height="1"/><rect x="898" y="434" width="1" height="1"/><rect x="900" y="432" width="1" height="1"/><rect x="902" y="430" width="1" height="1"/><rect x="904" y="428" width="1" height="1"/><rect x="906" y="426" width="1" height="1"/></g><rect x="786" y="439" width="1" height="3" fill="#2a2a2a"/><rect x="788" y="439" width="1" height="3" fill="#2a2a2a"/><rect x="790" y="439" width="1" height="3" fill="#2a2a2a"/><rect x="792" y="439" width="1" height="3" fill="#2a2a2a"/><rect x="794" y="439" width="1" height="3" fill="#2a2a2a"/><rect x="796" y="439" width="1" height="3" fill="#2a2a2a"/><rect x="798" y="439" width="1" height="3" fill="#2a2a2a"/><rect x="800" y="439" width="1" height="3" fill="#2a2a2a"/><rect x="802" y="439" width="1" height="3" fill="#2a2a2a"/><rect x="804" y="439" width="1" height="3" fill="#2a2a2a"/><defs><linearGradient id="lg1" x1="0" x2="0" y1="0" y2="1"><stop offset="0" stop-color="#dcdcdc"/><stop offset="1" stop-color="#a8a8a8"/></linearGradient></defs></svg></div>
<div id="info"><div style="left:470px;top:161px;width:252px;height:313px;background:#2e2e2e;border-radius:3px 3px 0 0"></div>
<div style="left:471px;top:162px;width:250px;height:12px;background:#393939;border-radius:3px 3px 0 0"></div>
<div style="left:471px;top:162px;width:250px;height:1px;background:#444;border-radius:3px 3px 0 0"></div>
<svg style="left:693px;top:166px" width="8" height="6" viewBox="0 0 8 6"><path d="M3.8 0 L0 3 L3.8 6Z M7.6 0 L3.8 3 L7.6 6Z" fill="#e0e0e0"/></svg>
<svg style="left:710px;top:165.5px" width="7" height="6" viewBox="0 0 7 6"><path d="M0.5 0.5 L6.5 5.5 M6.5 0.5 L0.5 5.5" stroke="#e8e8e8" stroke-width="1.6"/></svg>
<div style="left:471px;top:175px;width:250px;height:17px;background:#393939"></div>
<div style="left:471px;top:175px;width:62px;height:16.5px;background:#3e3e3e;border-top:1px solid #4a4a4a"></div>
<div style="left:534px;top:175px;width:34px;height:17.5px;background:#535353;border-top:1px solid #626262"></div>
<div style="left:569px;top:175px;width:63.5px;height:16.5px;background:#3e3e3e;border-top:1px solid #4a4a4a"></div>
<div style="left:633.5px;top:175px;width:87.5px;height:16.5px;background:#3e3e3e;border-top:1px solid #4a4a4a"></div>
<div class="tb" style="left:477px;top:179px">Navigator</div>
<div class="tb tba" style="left:541px;top:179px">Info</div>
<div class="tb" style="left:575px;top:179px">Histogram</div>
<svg style="left:703px;top:179px" width="15" height="9" viewBox="0 0 15 9"><rect x="0" y="2" width="5" height="1" fill="#111"/><path d="M0 3 H5 L2.5 6Z" fill="#dcdcdc"/><path d="M6 0.5 H14 M6 2.5 H14 M6 4.5 H14 M6 6.5 H14" stroke="#111" stroke-width="1"/><path d="M6 1.5 H14 M6 3.5 H14 M6 5.5 H14 M6 7.5 H14" stroke="#dcdcdc" stroke-width="1"/></svg>
<div style="left:471px;top:192px;width:250px;height:281px;background:#535353"></div>
<div style="left:471px;top:192px;width:63px;height:1px;background:#606060"></div>
<div style="left:568px;top:192px;width:153px;height:1px;background:#606060"></div>
<div style="left:471px;top:260px;width:250px;height:1px;background:#3a3a3a"></div>
<div style="left:471px;top:261px;width:250px;height:1px;background:#626262"></div>
<div style="left:471px;top:295px;width:250px;height:1px;background:#3a3a3a"></div>
<div style="left:471px;top:296px;width:250px;height:1px;background:#626262"></div>
<div style="left:471px;top:353px;width:250px;height:1px;background:#3a3a3a"></div>
<div style="left:471px;top:354px;width:250px;height:1px;background:#626262"></div>
<div style="left:471px;top:381px;width:250px;height:1px;background:#3a3a3a"></div>
<div style="left:471px;top:382px;width:250px;height:1px;background:#626262"></div>
<div style="left:594.5px;top:194px;width:1px;height:65px;background:#3a3a3a"></div>
<div style="left:595.5px;top:194px;width:1px;height:65px;background:#626262"></div>
<div style="left:594.5px;top:263px;width:1px;height:30px;background:#3a3a3a"></div>
<div style="left:595.5px;top:263px;width:1px;height:30px;background:#626262"></div>
<div style="left:594.5px;top:298px;width:1px;height:53px;background:#3a3a3a"></div>
<div style="left:595.5px;top:298px;width:1px;height:53px;background:#626262"></div>
<svg style="left:478px;top:206.5px" width="18" height="18" viewBox="0 0 18 18"><path d="M3.2 16.2 L2.6 14.6 L9.4 7.8 L11.2 9.6 L4.4 16.4Z" fill="#8a8a8a" stroke="#e0e0e0" stroke-width="1" stroke-dasharray="1.2 0.8"/><path d="M8.4 7.0 L12.0 10.6" stroke="#d8d8d8" stroke-width="2.4"/><path d="M10.2 7.2 L12.8 4.4 Q14.2 3.0 15.2 4.0 Q16.2 5.2 14.8 6.4 L12.0 9.0Z" fill="#c4c4c4"/><rect x="10.5" y="13.3" width="5" height="1" fill="#2e2e2e"/><path d="M10.5 14.3 H15.5 L13 16.8Z" fill="#cfcfcf"/></svg>
<svg style="left:602px;top:206.5px" width="18" height="18" viewBox="0 0 18 18"><path d="M3.2 16.2 L2.6 14.6 L9.4 7.8 L11.2 9.6 L4.4 16.4Z" fill="#8a8a8a" stroke="#e0e0e0" stroke-width="1" stroke-dasharray="1.2 0.8"/><path d="M8.4 7.0 L12.0 10.6" stroke="#d8d8d8" stroke-width="2.4"/><path d="M10.2 7.2 L12.8 4.4 Q14.2 3.0 15.2 4.0 Q16.2 5.2 14.8 6.4 L12.0 9.0Z" fill="#c4c4c4"/><rect x="10.5" y="13.3" width="5" height="1" fill="#2e2e2e"/><path d="M10.5 14.3 H15.5 L13 16.8Z" fill="#cfcfcf"/></svg>
<svg style="left:478px;top:309.5px" width="18" height="18" viewBox="0 0 18 18"><path d="M3.2 16.2 L2.6 14.6 L9.4 7.8 L11.2 9.6 L4.4 16.4Z" fill="#8a8a8a" stroke="#e0e0e0" stroke-width="1" stroke-dasharray="1.2 0.8"/><path d="M8.4 7.0 L12.0 10.6" stroke="#d8d8d8" stroke-width="2.4"/><path d="M10.2 7.2 L12.8 4.4 Q14.2 3.0 15.2 4.0 Q16.2 5.2 14.8 6.4 L12.0 9.0Z" fill="#c4c4c4"/><rect x="10.5" y="13.3" width="5" height="1" fill="#2e2e2e"/><path d="M10.5 14.3 H15.5 L13 16.8Z" fill="#cfcfcf"/></svg>
<div class="it" style="left:493.5px;top:202px;width:20px;text-align:right">R</div>
<div class="it" style="left:519px;top:202px;font-weight:bold">:</div>
<div class="it" style="left:493.5px;top:213px;width:20px;text-align:right">G</div>
<div class="it" style="left:519px;top:213px;font-weight:bold">:</div>
<div class="it" style="left:493.5px;top:224px;width:20px;text-align:right">B</div>
<div class="it" style="left:519px;top:224px;font-weight:bold">:</div>
<div class="it" style="left:495.5px;top:246px">16-bit</div>
<div class="it" style="left:617.5px;top:202px;width:20px;text-align:right">C</div>
<div class="it" style="left:643px;top:202px;font-weight:bold">:</div>
<div class="it" style="left:617.5px;top:213px;width:20px;text-align:right">M</div>
<div class="it" style="left:643px;top:213px;font-weight:bold">:</div>
<div class="it" style="left:617.5px;top:224px;width:20px;text-align:right">Y</div>
<div class="it" style="left:643px;top:224px;font-weight:bold">:</div>
<div class="it" style="left:617.5px;top:235px;width:20px;text-align:right">K</div>
<div class="it" style="left:643px;top:235px;font-weight:bold">:</div>
<div class="it" style="left:623px;top:246px">8-bit</div>
<svg style="left:477px;top:270px" width="17" height="16" viewBox="0 0 17 16"><path d="M7 1 V13 M1 7.5 H13" stroke="#d0d0d0" stroke-width="1"/><path d="M11.5 12 h5 l-2.5 2.5Z" fill="#c8c8c8"/></svg>
<div class="it" style="left:493.5px;top:268px;width:20px;text-align:right">X</div>
<div class="it" style="left:519px;top:268px;font-weight:bold">:</div>
<div class="it" style="left:493.5px;top:279px;width:20px;text-align:right">Y</div>
<div class="it" style="left:519px;top:279px;font-weight:bold">:</div>
<svg style="left:601px;top:269px" width="18" height="17" viewBox="0 0 18 17"><path d="M2.5 14 V4.5 H13" fill="none" stroke="#d0d0d0" stroke-width="1"/><path d="M13 2 L16 4.5 L13 7Z M0 13 L2.5 16 L5 13Z" fill="#d0d0d0"/><path d="M5 14.5 H15.5 V7" fill="none" stroke="#d0d0d0" stroke-width="1" stroke-dasharray="1 1"/></svg>
<div class="it" style="left:617.5px;top:268px;width:20px;text-align:right">W</div>
<div class="it" style="left:643px;top:268px;font-weight:bold">:</div>
<div class="it" style="left:617.5px;top:279px;width:20px;text-align:right">H</div>
<div class="it" style="left:643px;top:279px;font-weight:bold">:</div>
<div class="it" style="left:480px;top:301px">#1</div>
<div class="it" style="left:493.5px;top:301px;width:20px;text-align:right">R</div>
<div class="it" style="left:519px;top:301px;font-weight:bold">:</div>
<div class="it" style="left:555px;top:301px">7682</div>
<div class="it" style="left:482px;top:366px">Doc: 12,4M/0 bytes</div>
<div class="it" style="left:482px;top:394px;letter-spacing:-0.05px">Draw rectangular selection or move selection</div><div class="it" style="left:482px;top:406.5px;letter-spacing:0.03px;white-space:pre">outline.  Use Shift, Alt, and Ctrl for additional</div><div class="it" style="left:482px;top:419px">options.</div>
<svg style="left:708px;top:461px" width="12" height="12" viewBox="0 0 12 12"><g fill="#8a8a8a"><rect x="10" y="10" width="1" height="1"/><rect x="8" y="10" width="1" height="1"/><rect x="10" y="8" width="1" height="1"/><rect x="6" y="10" width="1" height="1"/><rect x="8" y="8" width="1" height="1"/><rect x="10" y="6" width="1" height="1"/><rect x="4" y="10" width="1" height="1"/><rect x="6" y="8" width="1" height="1"/><rect x="8" y="6" width="1" height="1"/><rect x="10" y="4" width="1" height="1"/><rect x="2" y="10" width="1" height="1"/><rect x="4" y="8" width="1" height="1"/><rect x="6" y="6" width="1" height="1"/><rect x="8" y="4" width="1" height="1"/><rect x="10" y="2" width="1" height="1"/></g></svg></div>
<div id="ctx"><div style="left:496px;top:312px;width:132px;height:238px;background:rgba(0,0,0,0.35);filter:blur(1px)"></div>
<div style="left:495px;top:311px;width:131px;height:237px;background:#fff;border:1px solid #aca899"></div>
<div class="mi" style="left:512.5px;top:318px;color:#000">Actual Color</div>
<div class="mi" style="left:512.5px;top:335px;color:#000">Proof Color</div>
<div style="left:499px;top:351.5px;width:123px;height:1px;background:#aca899"></div>
<div class="mi" style="left:512.5px;top:361px;color:#000">Grayscale</div>
<div style="left:498px;top:374px;width:125px;height:17px;background:#316ac5"></div>
<svg style="left:500px;top:379px" width="8" height="8" viewBox="0 0 8 8"><path d="M0.8 3.5 L3 6 L7.2 0.8" fill="none" stroke="#fff" stroke-width="1.9"/></svg>
<div class="mi" style="left:512.5px;top:378px;color:#fff">RGB Color</div>
<div class="mi" style="left:512.5px;top:395px;color:#000">Web Color</div>
<div class="mi" style="left:512.5px;top:412px;color:#000">HSB Color</div>
<div class="mi" style="left:512.5px;top:429px;color:#000">CMYK Color</div>
<div class="mi" style="left:512.5px;top:446px;color:#000">Lab Color</div>
<div style="left:499px;top:462.5px;width:123px;height:1px;background:#aca899"></div>
<div class="mi" style="left:512.5px;top:472px;color:#000">Total Ink</div>
<div style="left:499px;top:488.5px;width:123px;height:1px;background:#aca899"></div>
<div class="mi" style="left:512.5px;top:498px;color:#000">8-bit (0-255)</div>
<svg style="left:500px;top:516px" width="8" height="8" viewBox="0 0 8 8"><path d="M0.8 3.5 L3 6 L7.2 0.8" fill="none" stroke="#000" stroke-width="1.9"/></svg>
<div class="mi" style="left:512.5px;top:515px;color:#000">16-bit (0-32768)</div>
<div class="mi" style="left:512.5px;top:532px;color:#000">32-bit (0.0-1.0)</div></div>
<div id="taskbar"></div>
</body></html>
